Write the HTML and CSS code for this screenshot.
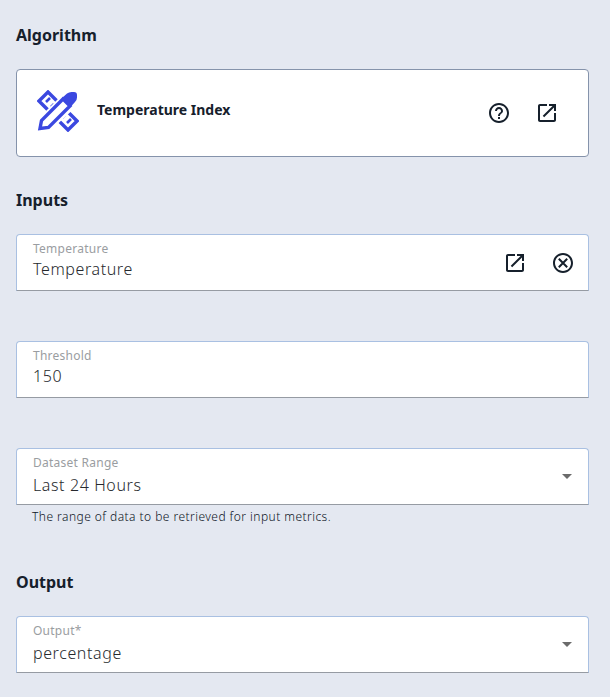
FILE: index.html
```html
<!DOCTYPE html>
<html lang="en">
<head>
    <meta charset="UTF-8">
    <title>Algorithm</title>
    <link rel="stylesheet" href="styles.css">
</head>
<body>
    <h2 class="section-title first">Algorithm</h2>
    <div class="algo-card">
        <svg class="algo-icon" viewBox="0 0 42 42">
            <path d="M2 11 L11 2 L40 31 L31 40 Z" fill="#fff" stroke="#3b48e0" stroke-width="3.4"/>
            <path d="M9 12 l4 -4 M14 17 l3 -3 M25 28 l3 -3 M30 33 l4 -4" stroke="#3b48e0" stroke-width="2.6" fill="none"/>
            <path d="M0 42 L1 29 L27 3 L41 3 L41 15 L13 41 Z" fill="#fff"/>
            <path d="M3 38.5 L4.5 30.5 L26 9 L33 16 L11.5 37.5 Z" fill="#fff" stroke="#3b48e0" stroke-width="3.4"/>
            <path d="M25 8 L30 3.5 Q32 2 34.5 2 L37 2 Q40 2 40 5 L40 7.5 Q40 10 38 12 L33.5 17 Z" fill="#3b48e0"/>
        </svg>
        <span class="algo-name">Temperature Index</span>
        <div class="algo-actions">
            <svg class="icon" viewBox="0 0 24 24"><path d="M11 18h2v-2h-2v2zm1-16C6.48 2 2 6.48 2 12s4.48 10 10 10 10-4.48 10-10S17.52 2 12 2zm0 18c-4.41 0-8-3.59-8-8s3.59-8 8-8 8 3.59 8 8-3.59 8-8 8zm0-14c-2.21 0-4 1.79-4 4h2c0-1.1.9-2 2-2s2 .9 2 2c0 2-3 1.75-3 5h2c0-2.25 3-2.5 3-5 0-2.21-1.79-4-4-4z"/></svg>
            <svg class="icon" viewBox="0 0 24 24"><path d="M19 19H5V5h7V3H5c-1.11 0-2 .9-2 2v14c0 1.1.89 2 2 2h14c1.1 0 2-.9 2-2v-7h-2v7zM14 3v2h3.59l-9.83 9.83 1.41 1.41L19 6.41V10h2V3h-7z"/></svg>
        </div>
    </div>

    <h2 class="section-title">Inputs</h2>
    <div class="field">
        <div class="field-text">
            <label>Temperature</label>
            <div class="value">Temperature</div>
        </div>
        <div class="field-actions">
            <svg class="icon" viewBox="0 0 24 24"><path d="M19 19H5V5h7V3H5c-1.11 0-2 .9-2 2v14c0 1.1.89 2 2 2h14c1.1 0 2-.9 2-2v-7h-2v7zM14 3v2h3.59l-9.83 9.83 1.41 1.41L19 6.41V10h2V3h-7z"/></svg>
            <svg class="icon" viewBox="0 0 24 24"><path d="M12 2C6.47 2 2 6.47 2 12s4.47 10 10 10 10-4.47 10-10S17.53 2 12 2zm0 18c-4.41 0-8-3.59-8-8s3.59-8 8-8 8 3.59 8 8-3.59 8-8 8z"/><path d="M7.8 7.8 L16.2 16.2 M16.2 7.8 L7.8 16.2" class="icon-stroke"/></svg>
        </div>
    </div>

    <div class="field spaced">
        <div class="field-text">
            <label>Threshold</label>
            <div class="value">150</div>
        </div>
    </div>

    <div class="field spaced select">
        <div class="field-text">
            <label>Dataset Range</label>
            <div class="value">Last 24 Hours</div>
        </div>
        <span class="caret"></span>
    </div>
    <p class="helper">The range of data to be retrieved for input metrics.</p>

    <h2 class="section-title output">Output</h2>
    <div class="field select">
        <div class="field-text">
            <label>Output*</label>
            <div class="value">percentage</div>
        </div>
        <span class="caret"></span>
    </div>
</body>
</html>
```

FILE: styles.css
```css
* {
    box-sizing: border-box;
    margin: 0;
    padding: 0;
}

body {
    width: 610px;
    height: 697px;
    overflow: hidden;
    padding: 0 21px 0 16px;
    background: #e4e8f1;
    font-family: 'Noto Sans', 'Open Sans', sans-serif;
    color: #16202c;
}

.section-title {
    height: 24px;
    margin-top: 31px;
    margin-bottom: 22px;
    font-size: 16px;
    line-height: 24px;
    font-weight: 700;
}

.section-title.first {
    margin-top: 23px;
}

.section-title.output {
    margin-top: 45px;
}

.algo-card {
    display: flex;
    align-items: center;
    height: 88px;
    padding: 0 29px 5px 20px;
    background: #fff;
    border: 1px solid #8593ab;
    border-radius: 4px;
}

.algo-icon {
    width: 42px;
    height: 42px;
    margin-right: 18px;
}

.algo-name {
    font-size: 14px;
    font-weight: 700;
    padding-bottom: 2px;
}

.algo-actions {
    display: flex;
    gap: 24px;
    margin-left: auto;
    padding-top: 4px;
}

.icon {
    display: block;
    width: 24px;
    height: 24px;
    fill: #16202c;
}

.icon-stroke {
    fill: none;
    stroke: #16202c;
    stroke-width: 2;
}

.field {
    display: flex;
    align-items: center;
    height: 57px;
    padding: 0 11px 0 16px;
    background: #fff;
    border: 1px solid #a9c0e2;
    border-bottom-color: #969ba3;
    border-radius: 4px 4px 0 0;
}

.field.spaced {
    margin-top: 50px;
}

.field-text {
    flex: 1;
    padding-bottom: 4px;
}

.select .field-text {
    padding-bottom: 2px;
}

.select .field-text label {
    margin-bottom: 2px;
}

.field-text label {
    display: block;
    font-size: 12px;
    line-height: 16px;
    letter-spacing: 0.25px;
    color: #9a9da1;
}

.value {
    font-size: 16px;
    line-height: 24px;
    letter-spacing: 0.6px;
    font-weight: 300;
    color: #26292d;
}

.field-actions {
    display: flex;
    gap: 24px;
    padding-right: 2px;
}

.caret {
    width: 0;
    height: 0;
    margin-right: 5px;
    border-left: 5px solid transparent;
    border-right: 5px solid transparent;
    border-top: 5px solid #6b6b6b;
}

.helper {
    margin-top: 4px;
    padding-left: 16px;
    font-size: 12px;
    line-height: 16px;
    letter-spacing: 0.45px;
    font-weight: 300;
    color: #0c141e;
}
```
